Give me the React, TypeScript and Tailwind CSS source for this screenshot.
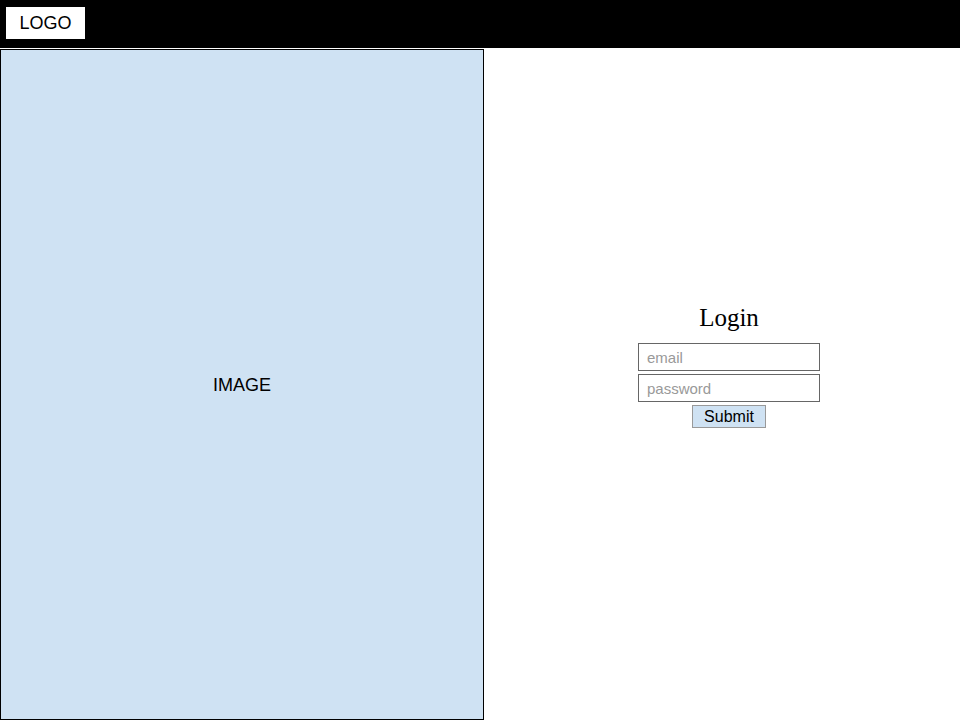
export default function App() {
  return (
    <div className="w-[960px] h-[720px] flex flex-col bg-white font-['Liberation_Sans',Arial,sans-serif] overflow-hidden">
      {/* header */}
      <div className="h-[48px] bg-black flex items-start px-[6px] pt-[7px]">
        <div className="w-[79px] h-[32px] bg-white flex items-center justify-center text-[18px] text-black">LOGO</div>
      </div>

      <div className="flex flex-1 pt-[1px]">
        {/* image panel */}
        <div className="w-[484px] h-[671px] bg-[#cfe2f3] border border-black flex items-center justify-center pt-[2px] text-[18px] text-black">
          IMAGE
        </div>

        {/* login */}
        <div className="flex-1 flex justify-center pl-[14px] pt-[254px]">
          <div className="flex flex-col items-center">
            <h1 className="font-['Liberation_Serif',Georgia,serif] text-[25px] leading-[30px] text-black mb-[10px]">Login</h1>
            <input
              placeholder="email"
              className="w-[182px] h-[28px] border border-[#666] px-[8px] text-[15px] text-black placeholder:text-[#999] outline-none"
            />
            <input
              type="password"
              placeholder="password"
              className="w-[182px] h-[28px] border border-[#666] px-[8px] text-[15px] text-black placeholder:text-[#999] outline-none mt-[3px]"
            />
            <button className="w-[74px] h-[23px] bg-[#cfe2f3] border border-[#999] text-[16px] leading-none text-black mt-[3px]">
              Submit
            </button>
          </div>
        </div>
      </div>
    </div>
  );
}
